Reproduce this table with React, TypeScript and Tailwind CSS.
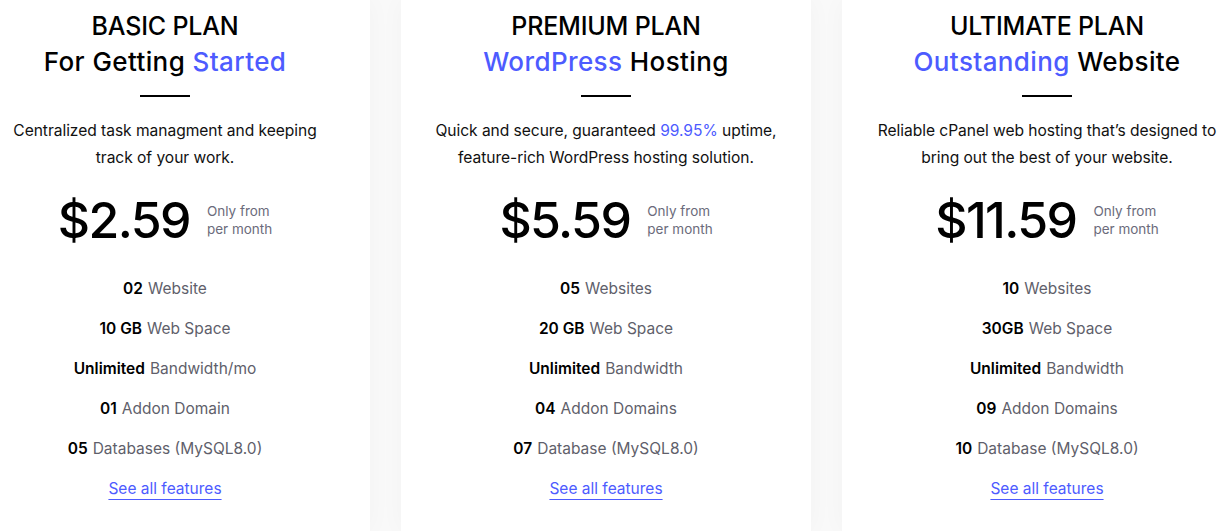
import React from "react";

type Feature = { bold: string; rest: string };

type Plan = {
  name: string;
  subtitle: React.ReactNode;
  description: React.ReactNode;
  price: string;
  features: Feature[];
};

const BLUE = "text-[#4d5bff]";

const PLANS: Plan[] = [
  {
    name: "BASIC PLAN",
    subtitle: (
      <>
        For Getting <span className={BLUE}>Started</span>
      </>
    ),
    description: (
      <>
        Centralized task managment and keeping
        <br />
        track of your work.
      </>
    ),
    price: "$2.59",
    features: [
      { bold: "02", rest: "Website" },
      { bold: "10 GB", rest: "Web Space" },
      { bold: "Unlimited", rest: "Bandwidth/mo" },
      { bold: "01", rest: "Addon Domain" },
      { bold: "05", rest: "Databases (MySQL8.0)" },
    ],
  },
  {
    name: "PREMIUM PLAN",
    subtitle: (
      <>
        <span className={BLUE}>WordPress</span> Hosting
      </>
    ),
    description: (
      <>
        Quick and secure, guaranteed <span className={BLUE}>99.95%</span> uptime,
        <br />
        feature-rich WordPress hosting solution.
      </>
    ),
    price: "$5.59",
    features: [
      { bold: "05", rest: "Websites" },
      { bold: "20 GB", rest: "Web Space" },
      { bold: "Unlimited", rest: "Bandwidth" },
      { bold: "04", rest: "Addon Domains" },
      { bold: "07", rest: "Database (MySQL8.0)" },
    ],
  },
  {
    name: "ULTIMATE PLAN",
    subtitle: (
      <>
        <span className={BLUE}>Outstanding</span> Website
      </>
    ),
    description: (
      <>
        Reliable cPanel web hosting that’s designed to
        <br />
        bring out the best of your website.
      </>
    ),
    price: "$11.59",
    features: [
      { bold: "10", rest: "Websites" },
      { bold: "30GB", rest: "Web Space" },
      { bold: "Unlimited", rest: "Bandwidth" },
      { bold: "09", rest: "Addon Domains" },
      { bold: "10", rest: "Database (MySQL8.0)" },
    ],
  },
];

function PlanCard({ plan }: { plan: Plan }) {
  return (
    <div className="flex w-[410px] shrink-0 flex-col items-center bg-white pt-[9px] text-center shadow-[0_0_24px_rgba(0,0,0,0.03)]">
      <h3 className="font-medium leading-[35px] text-black">
        <span className="block text-[25px] tracking-[-0.2px]">{plan.name}</span>
        <span className="block text-[26px] tracking-[0.4px]">{plan.subtitle}</span>
      </h3>
      <div className="mt-[16px] h-[2px] w-[50px] bg-black" />
      <p className="mt-[20px] text-[15.6px] leading-[27px] tracking-[-0.05px] text-[#111]">
        {plan.description}
      </p>
      <div className="mt-[23px] flex items-center gap-[17px]">
        <span className="text-[50px] font-medium leading-[52px] tracking-[-1.6px] text-black">
          {plan.price}
        </span>
        <span className="text-left text-[13.5px] leading-[18px] text-[#6b6b7b]">
          Only from
          <br />
          per month
        </span>
      </div>
      <ul className="mt-[23px] flex flex-col items-center text-[15.5px]">
        {plan.features.map((f) => (
          <li key={f.rest} className="flex h-[40px] items-center gap-[5px]">
            <span className="font-semibold text-black">{f.bold}</span>
            <span className="text-[#5f5f6b]">{f.rest}</span>
          </li>
        ))}
        <li className="flex h-[40px] items-center">
          <a
            href="#"
            className="text-[#4d5bff] underline decoration-1 underline-offset-[5px]"
          >
            See all features
          </a>
        </li>
      </ul>
    </div>
  );
}

export default function App() {
  return (
    <div
      className="flex h-[531px] w-[1224px] gap-[31px] overflow-hidden bg-[#f9f9f9]"
      style={{ fontFamily: "Inter, 'Liberation Sans', sans-serif" }}
    >
      <div className="ml-[-40px] flex shrink-0 gap-[31px]">
        {PLANS.map((p) => (
          <PlanCard key={p.name} plan={p} />
        ))}
      </div>
    </div>
  );
}
